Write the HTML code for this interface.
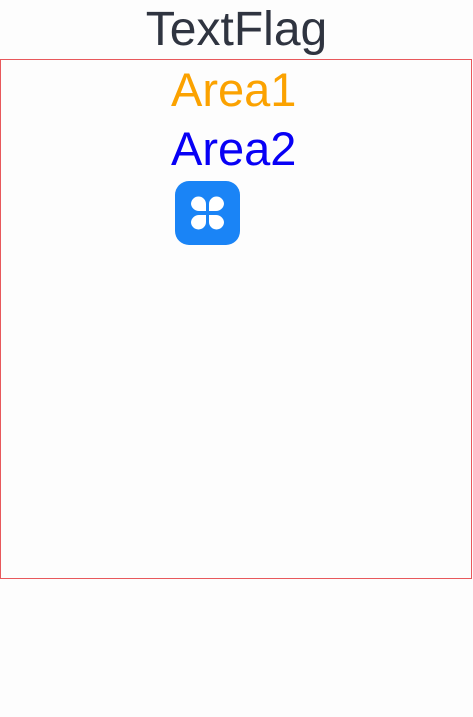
<!DOCTYPE html>
<html><head><style>
body{margin:0;width:473px;height:717px;background:#fdfdfd;position:relative;font-family:"Liberation Sans",sans-serif;overflow:hidden}
.t{position:absolute;left:0;width:473px;text-align:center;white-space:nowrap;line-height:1}
#box{position:absolute;left:0;top:59px;width:470px;height:518px;border:1px solid #e8585c}
</style></head><body>
<div class="t" style="top:6px;font-size:48px;color:#2f3440;">TextFlag</div>
<div id="box"></div>
<div style="position:absolute;left:171px;top:66px;font-size:47px;color:#fba200;line-height:1">Area1</div>
<div style="position:absolute;left:171px;top:125px;font-size:47px;color:#0800f5;line-height:1">Area2</div>
<svg style="position:absolute;left:175px;top:181px" width="65" height="64" viewBox="0 0 65 64">
<rect width="65" height="64" rx="14" fill="#1a84f6"/>
<g fill="#fff">
<path d="M16 23a7.5 7.5 0 0 1 15 0v7h-7a8 8 0 0 1-8-7z"/>
<path d="M49 23a7.5 7.5 0 0 0-15 0v7h7a8 8 0 0 0 8-7z"/>
<path d="M16 41a7.5 7.5 0 0 0 15 0v-7h-7a8 8 0 0 0-8 7z"/>
<path d="M49 41a7.5 7.5 0 0 1-15 0v-7h7a8 8 0 0 1 8 7z"/>
</g></svg>
</body></html>
